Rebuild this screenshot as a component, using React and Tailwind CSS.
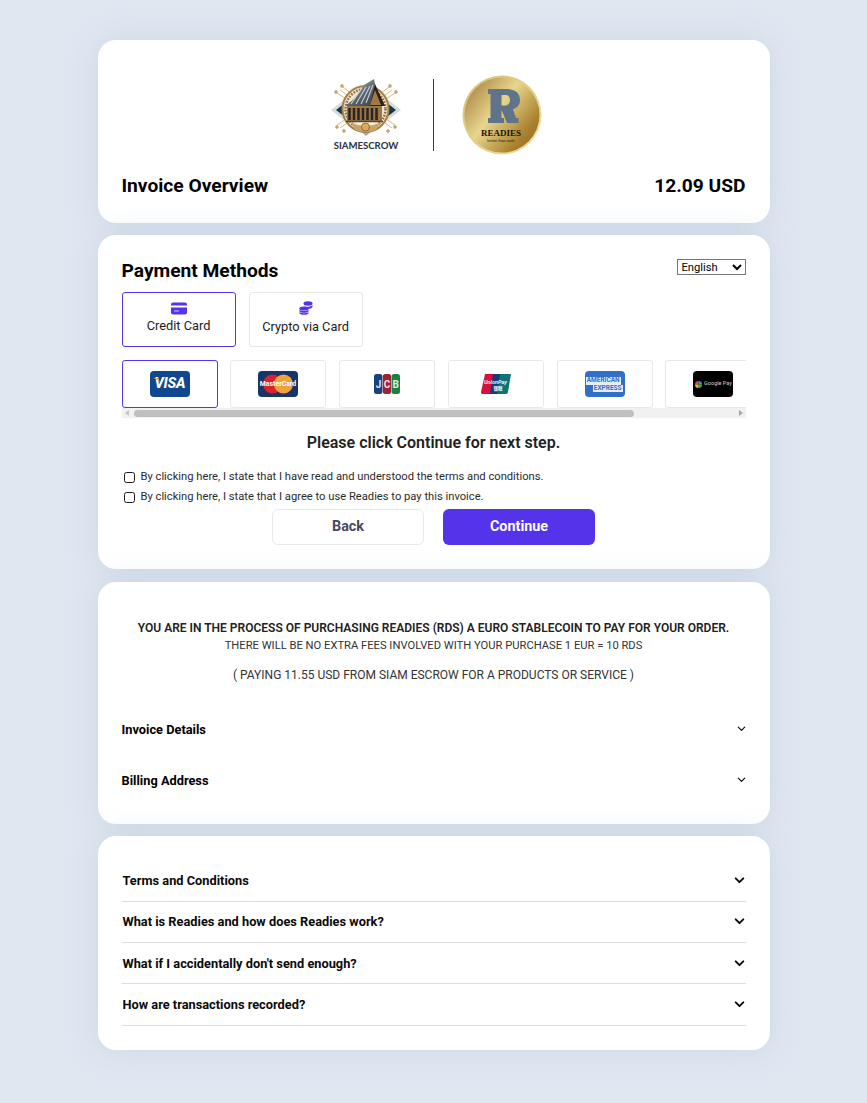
import React from "react";

const Chevron = ({ size = 12, width = 2.5 }) => (
  <svg width={size} height={size} viewBox="0 0 24 24" fill="none" stroke="currentColor" strokeWidth={width} strokeLinecap="round" strokeLinejoin="round">
    <path d="M5 9l7 7 7-7" />
  </svg>
);

const SiamLogo = () => (
  <div className="flex flex-col items-center w-[70px]">
    <svg width="70" height="58" viewBox="0 0 70 58">
      <defs>
        <linearGradient id="roof" x1="0" y1="0" x2="1" y2="1">
          <stop offset="0" stopColor="#b9c2c8" />
          <stop offset="0.5" stopColor="#59636d" />
          <stop offset="1" stopColor="#2c2c30" />
        </linearGradient>
      </defs>
      <g stroke="#c7a76e" strokeWidth="0.8" fill="#c7a76e">
        <path d="M6 14 L18 22 M9 11 L20 19 M12 8 L22 16 M64 14 L52 22 M61 11 L50 19 M58 8 L48 16 M6 46 L18 38 M9 49 L20 41 M64 46 L52 38 M61 49 L50 41" />
        <circle cx="5" cy="13" r="1.4" /><circle cx="11" cy="7" r="1.4" /><circle cx="65" cy="13" r="1.4" /><circle cx="59" cy="7" r="1.4" />
        <circle cx="6" cy="48" r="1.4" /><circle cx="13" cy="52" r="1.4" /><circle cx="64" cy="48" r="1.4" /><circle cx="57" cy="52" r="1.4" />
      </g>
      <path d="M0 31 L14 20 V42 Z" fill="#d6dbde" />
      <path d="M70 31 L56 20 V42 Z" fill="#d6dbde" />
      <path d="M5 31 L14 24 V38 Z" fill="#173844" />
      <path d="M65 31 L56 24 V38 Z" fill="#173844" />
      <path d="M22 46 L35 57 L48 46 Z" fill="#a8adb0" />
      <circle cx="34.5" cy="30" r="23" fill="#efe3cc" stroke="#a77f45" strokeWidth="2" />
      <circle cx="34.5" cy="30" r="20" fill="none" stroke="#8a6a38" strokeWidth="2.4" strokeDasharray="1.6 1.4" />
      <circle cx="34.5" cy="30" r="17" fill="#f6f0e2" />
      <path d="M15 26 C22 22 28 14 33 6 L43 0 L45 10 C47 16 50 22 54 27 L48 27 L17 29 Z" fill="url(#roof)" />
      <path d="M20 25 L31 9 M25 25 L35 8 M30 25 L39 7 M35 24 L42 6" stroke="#c9d0d4" strokeWidth="1.1" />
      <path d="M44 5 L54 27 L39 27 Z" fill="#2e2118" />
      <path d="M44 11 L50 26 L39 26 Z" fill="#a07a42" />
      <rect x="16" y="27" width="35" height="15" fill="#9a7744" />
      <path d="M18.5 29 V41 M23 29 V41 M27.5 29 V41 M32 29 V41 M36.5 29 V41 M41 29 V41 M45.5 29 V41" stroke="#2a2422" strokeWidth="2.5" />
      <path d="M15 42.5 H52" stroke="#5a4226" strokeWidth="1.6" />
      <path d="M20 44 Q34.5 50 49 44 L45 51 Q34.5 55 24 51 Z" fill="#c9a468" />
      <circle cx="34.5" cy="48" r="4" fill="#dcab58" stroke="#80602d" strokeWidth="0.8" />
    </svg>
    <span className="mt-[3px] text-[9.6px] leading-[11px] font-bold text-[#2c3040] font-['Lato',sans-serif]">SIAMESCROW</span>
  </div>
);

const ReadiesLogo = () => (
  <svg width="80" height="80" viewBox="0 0 80 80">
    <defs>
      <linearGradient id="gold" x1="0" y1="0.1" x2="1" y2="0.9">
        <stop offset="0" stopColor="#a57f3c" />
        <stop offset="0.42" stopColor="#e8d68e" />
        <stop offset="0.8" stopColor="#a9812f" />
        <stop offset="1" stopColor="#8f6a22" />
      </linearGradient>
      <linearGradient id="rim" x1="0" y1="0" x2="1" y2="1">
        <stop offset="0" stopColor="#d8c078" />
        <stop offset="1" stopColor="#f0e0a0" />
      </linearGradient>
    </defs>
    <circle cx="40" cy="40" r="39.5" fill="url(#rim)" />
    <circle cx="40" cy="40" r="37.5" fill="url(#gold)" />
    <path fillRule="evenodd" fill="#5f7389" d="M26 14 H44 C54 14 58 19 58 25 C58 30 55 33 51 34.5 L54 43 H56.5 V48 H45 L40 36 H39.5 V43 H42 V48 H26 V43 H28.5 V19 H26 Z M39.5 20 V30.5 H43 C46.5 30.5 48 28 48 25 C48 22 46.5 20 43 20 Z" />
    <text x="39" y="60.5" textAnchor="middle" fontFamily="'Liberation Serif',serif" fontWeight="700" fontSize="9" fill="#15130c">READIES</text>
    <text x="39" y="66.5" textAnchor="middle" fontFamily="Roboto,sans-serif" fontSize="3.8" fill="#2a2413">better than cash</text>
  </svg>
);

const Badge = ({ bg, children }) => (
  <div className={`relative w-10 h-[26px] rounded-[4px] flex items-center justify-center overflow-hidden ${bg}`}>{children}</div>
);

const Visa = () => (
  <Badge bg="bg-[#10478f]">
    <svg width="7" height="4" viewBox="0 0 7 4" className="absolute left-[3px] top-[7px]"><path d="M0 0 H5 L7 4 Q4 1.2 0 0 Z" fill="#e8a92c" /></svg>
    <span className="text-white italic font-extrabold text-[14.5px] leading-none font-['Roboto',sans-serif] tracking-[-0.2px] ml-px">VISA</span>
  </Badge>
);

const Master = () => (
  <Badge bg="bg-[#17356b]">
    <svg width="40" height="26" viewBox="0 0 40 26">
      <circle cx="14.5" cy="13" r="9.5" fill="#d9222a" />
      <circle cx="25.5" cy="13" r="9.5" fill="#eea23a" />
      <text x="20" y="15.4" textAnchor="middle" fontFamily="Roboto,sans-serif" fontWeight="700" fontSize="6.9" fill="#fff">MasterCard</text>
    </svg>
  </Badge>
);

const Jcb = () => (
  <svg width="26" height="20" viewBox="0 0 26 20">
    <rect x="0" y="0" width="8.4" height="20" rx="2.5" fill="#17427f" />
    <rect x="8.8" y="0" width="8.4" height="20" rx="2.5" fill="#9c2336" />
    <rect x="17.6" y="0" width="8.4" height="20" rx="2.5" fill="#17833f" />
    <text x="4.6" y="14" textAnchor="middle" fontFamily="Roboto,sans-serif" fontWeight="700" fontSize="10" fill="#dfe6ef">J</text>
    <text x="13" y="14" textAnchor="middle" fontFamily="Roboto,sans-serif" fontWeight="700" fontSize="10" fill="#f2dfe0">C</text>
    <text x="21.6" y="14" textAnchor="middle" fontFamily="Roboto,sans-serif" fontWeight="700" fontSize="10" fill="#e0f0e4">B</text>
  </svg>
);

const Union = () => (
  <svg width="30" height="20" viewBox="0 0 30 20">
    <path d="M4 0 H14 L11 20 H1 Q0 20 0 18 Z" fill="#d6113f" />
    <path d="M12 0 H21 L18 20 H9 Z" fill="#123d78" />
    <path d="M19 0 H30 L27 18 Q27 20 25 20 H16 Z" fill="#0d7377" />
    <text x="14.5" y="9.5" textAnchor="middle" fontFamily="Roboto,sans-serif" fontStyle="italic" fontWeight="500" fontSize="5.6" fill="#fff">UnionPay</text>
    <text x="17" y="16" textAnchor="middle" fontFamily="'Noto Sans CJK SC',sans-serif" fontWeight="700" fontSize="4.6" fill="#fff">银联</text>
  </svg>
);

const Amex = () => (
  <Badge bg="bg-[#316fc9]">
    <div className="flex flex-col items-center font-['Roboto',sans-serif] font-bold text-[6.5px] leading-[7.5px] text-[#316fc9] mt-px">
      <span className="bg-[#e4eefb] px-px ml-[-3px]">AMERICAN</span>
      <span className="bg-[#e4eefb] px-px ml-[6px]">EXPRESS</span>
    </div>
  </Badge>
);

const GPay = () => (
  <Badge bg="bg-black">
    <div className="flex items-center gap-[2px]">
      <svg width="7" height="7" viewBox="0 0 8 8">
        <path d="M0 4 A4 4 0 0 1 4 0 V4 Z" fill="#ea4335" />
        <path d="M4 0 A4 4 0 0 1 8 4 H4 Z" fill="#4285f4" />
        <path d="M8 4 A4 4 0 0 1 4 8 V4 Z" fill="#34a853" />
        <path d="M4 8 A4 4 0 0 1 0 4 H4 Z" fill="#fbbc04" />
      </svg>
      <span className="text-[#cfcfcf] text-[5.5px] leading-none whitespace-nowrap font-['Roboto',sans-serif]">Google Pay</span>
    </div>
  </Badge>
);

const Tile = ({ active, children }) => (
  <div className={`w-24 h-12 shrink-0 rounded-[3px] bg-white border flex items-center justify-center ${active ? "border-[#5433eb]" : "border-[#e8e8e8]"}`}>
    {children}
  </div>
);

const Check = ({ children, className = "" }) => (
  <label className={`flex items-center text-[11.2px] leading-[20px] text-[#2b2b2b] ${className}`}>
    <span className="w-[9px] h-[9px] ml-[2px] mr-[6px] rounded-[2.5px] border border-[#1a1a1a] box-content shrink-0" />
    {children}
  </label>
);

const Faq = ({ children }) => (
  <div className="h-[41.3px] border-b border-[#dedede] flex items-center justify-between pl-px text-[#0a0a0a]">
    <span className="text-[12.8px] font-bold translate-y-[-0.5px]">{children}</span>
    <span className="translate-y-[-0.5px]"><Chevron size={13} width={3.6} /></span>
  </div>
);

const card = "w-[672px] bg-white rounded-[18px] shadow-[0_0_30px_rgba(170,190,212,0.42)]";

export default function App() {
  return (
    <div className="min-h-[1103px] bg-[#e1e7f1] flex flex-col items-center pt-10 font-['Roboto',sans-serif]">
      <section className={`${card} h-[183px] px-6 flex flex-col`}>
        <div className="flex items-center justify-center h-[78px] mt-9 pl-[6px]">
          <SiamLogo />
          <div className="w-px h-[72px] bg-[#3c3c50] ml-8 mr-7" />
          <ReadiesLogo />
        </div>
        <div className="flex items-center justify-between mt-5 text-[19.2px] leading-6 font-bold text-black">
          <span>Invoice Overview</span>
          <span>12.09 USD</span>
        </div>
      </section>

      <section className={`${card} h-[334px] mt-3 px-6 pt-6 flex flex-col`}>
        <div className="flex items-start justify-between">
          <h2 className="text-[19.2px] leading-6 font-bold text-black">Payment Methods</h2>
          <select defaultValue="English" className="w-[69px] h-4 border border-[#767676] text-[11.2px] leading-[14px] text-black bg-white font-['Roboto',sans-serif]">
            <option>English</option>
          </select>
        </div>
        <div className="flex gap-[13px] mt-[9px]">
          <div className="w-[114px] h-[55px] rounded-[3px] border border-[#5433eb] flex flex-col items-center pt-[9px]">
            <svg width="16" height="13" viewBox="0 0 16 13" fill="#5433eb">
              <path d="M2 0.5 H14 A2 2 0 0 1 16 2.5 V3.5 H0 V2.5 A2 2 0 0 1 2 0.5 Z M0 5.5 H16 V10.5 A2 2 0 0 1 14 12.5 H2 A2 2 0 0 1 0 10.5 Z" />
              <rect x="3" y="8.5" width="5" height="1" fill="#c9bff8" />
            </svg>
            <span className="text-[12.8px] leading-[18px] mt-[2px] text-[#1c1c1c]">Credit Card</span>
          </div>
          <div className="w-[114px] h-[55px] rounded-[3px] border border-[#e8e8e8] flex flex-col items-center pt-[9px]">
            <svg width="14" height="14" viewBox="0 0 14 14" fill="#5433eb" className="mt-[-1px]">
              <ellipse cx="9" cy="2.5" rx="4.5" ry="2.2" />
              <path d="M4.8 5.2 Q9 7 13.5 4.6 V6 Q13 7.6 9.6 7.9 Q8 6.4 4.8 5.6 Z" />
              <ellipse cx="5" cy="7.5" rx="4.7" ry="2.1" />
              <path d="M0.3 9 Q5 11.2 9.7 9 V10 Q9 11.8 5 11.8 Q1 11.8 0.3 10 Z" />
              <path d="M0.3 11.3 Q5 13.3 9.7 11.3 V12 Q9 13.8 5 13.8 Q1 13.8 0.3 12 Z" />
            </svg>
            <span className="text-[12.8px] leading-[18px] mt-[3px] text-[#1c1c1c]">Crypto via Card</span>
          </div>
        </div>
        <div className="mt-[13px] overflow-hidden">
          <div className="flex gap-[12.8px]">
            <Tile active><Visa /></Tile>
            <Tile><Master /></Tile>
            <Tile><Jcb /></Tile>
            <Tile><Union /></Tile>
            <Tile><Amex /></Tile>
            <Tile><GPay /></Tile>
          </div>
          <div className="h-[10px] bg-[#f1f1f1] flex items-center justify-between px-[3px]">
            <span className="w-0 h-0 border-y-[3.5px] border-y-transparent border-r-[4px] border-r-[#c4c4c4]" />
            <span className="w-[500px] h-[7px] rounded-full bg-[#bfbfbf] ml-[5px] mr-auto" />
            <span className="w-0 h-0 border-y-[3.5px] border-y-transparent border-l-[4px] border-l-[#a8a8a8]" />
          </div>
        </div>
        <p className="text-center text-[16px] leading-5 font-semibold text-[#222] mt-[15px]">Please click Continue for next step.</p>
        <Check className="mt-[14px]">By clicking here, I state that I have read and understood the terms and conditions.</Check>
        <Check>By clicking here, I state that I agree to use Readies to pay this invoice.</Check>
        <div className="flex justify-center gap-[19px] mt-[2px]">
          <button className="w-[152px] h-9 rounded-[6px] border border-[#e8e8e8] bg-white text-[14.4px] font-bold text-[#4a4860]">Back</button>
          <button className="w-[152px] h-9 rounded-[6px] bg-[#5433eb] text-[14.4px] font-bold text-white">Continue</button>
        </div>
      </section>

      <section className={`${card} h-[242px] mt-[13px] px-6 flex flex-col`}>
        <p className="text-center text-[12.03px] leading-[18px] font-semibold text-[#222] mt-[37px]">YOU ARE IN THE PROCESS OF PURCHASING READIES (RDS) A EURO STABLECOIN TO PAY FOR YOUR ORDER.</p>
        <p className="text-center text-[11.2px] leading-[18px] text-[#333]">THERE WILL BE NO EXTRA FEES INVOLVED WITH YOUR PURCHASE 1 EUR = 10 RDS</p>
        <p className="text-center text-[12px] leading-[18px] text-[#333] mt-[11px]">( PAYING 11.55 USD FROM SIAM ESCROW FOR A PRODUCTS OR SERVICE )</p>
        <div className="flex items-center justify-between h-5 mt-[36px] text-black">
          <span className="text-[12.8px] font-bold">Invoice Details</span>
          <span className="mt-[-3px] mr-[-1px]"><Chevron size={11} width={2.4} /></span>
        </div>
        <div className="flex items-center justify-between h-5 mt-[31px] text-black">
          <span className="text-[12.8px] font-bold">Billing Address</span>
          <span className="mt-[-3px] mr-[-1px]"><Chevron size={11} width={2.4} /></span>
        </div>
      </section>

      <section className={`${card} h-[214px] mt-3 px-6 pt-[24.5px]`}>
        <Faq>Terms and Conditions</Faq>
        <Faq>What is Readies and how does Readies work?</Faq>
        <Faq>What if I accidentally don't send enough?</Faq>
        <Faq>How are transactions recorded?</Faq>
      </section>
    </div>
  );
}
